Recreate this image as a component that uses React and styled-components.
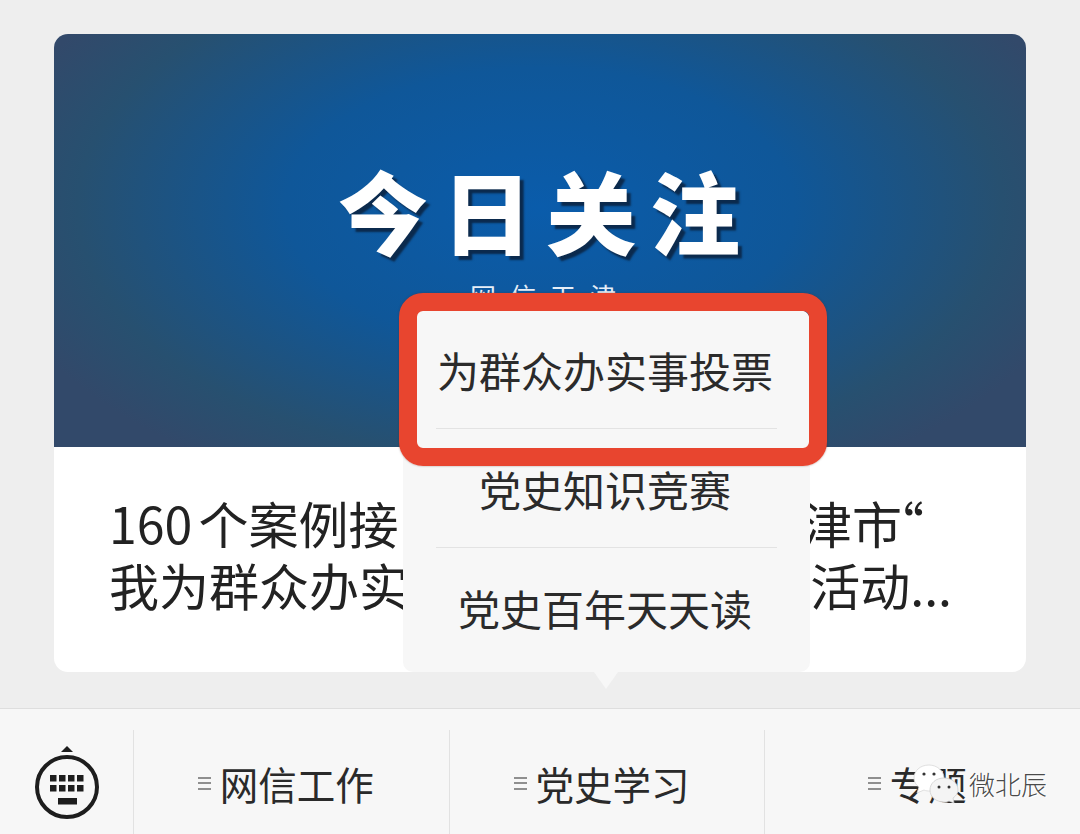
import React from 'react';
import styled, { createGlobalStyle } from 'styled-components';

const GlobalStyle = createGlobalStyle`
  html, body {
    margin: 0;
    padding: 0;
    background: #eeeeee;
    font-family: "Noto Sans CJK SC", "Liberation Sans", sans-serif;
  }
`

const Page = styled.div`
  position: relative;
  width: 1080px;
  height: 834px;
  overflow: hidden;
  display: flex;
  flex-direction: column;
  background: #eeeeee;
`

const CardArea = styled.div`
  padding: 34px 54px 36px;
`

const Card = styled.div`
  height: 638px;
  border-radius: 14px;
  overflow: hidden;
  background: #ffffff;
`

const Banner = styled.div`
  height: 413px;
  display: flex;
  flex-direction: column;
  align-items: center;
  padding-top: 119px;
  box-sizing: border-box;
  background: radial-gradient(ellipse 58% 75% at 50% 42%, #0a5cab 0%, #0f5799 45%, #275070 82%, #32496a 100%);
`

const BannerTitle = styled.div`
  font-size: 90px;
  line-height: 112px;
  font-weight: 900;
  letter-spacing: 14px;
  margin-right: -12px;
  color: #ffffff;
  text-shadow: 4px 4px 2px #0b2a4d;
`

const BannerSub = styled.div`
  margin: 13px 0 0 20px;
  font-size: 26px;
  line-height: 36px;
  letter-spacing: 14px;
  color: #e6eef7;
`

const Headline = styled.div`
  padding: 44px 74px 0 55px;
  font-size: 50px;
  line-height: 62px;
  color: #222222;
`

const HeadlineRow = styled.div`
  display: flex;
  justify-content: space-between;
  word-spacing: -5px;
`

const OpenQuote = styled.span`
  margin: 0 28px 0 -28px;
`

const Popup = styled.div`
  position: absolute;
  left: 403px;
  top: 310px;
  width: 407px;
  height: 362px;
  border-radius: 10px;
  background: #f7f7f7;
  display: flex;
  flex-direction: column;

  &::after {
    content: '';
    position: absolute;
    left: 191px;
    bottom: -17px;
    border-left: 12px solid transparent;
    border-right: 12px solid transparent;
    border-top: 17px solid #f7f7f7;
  }
`

const PopupItem = styled.div`
  height: ${props => props.$height}px;
  margin: 0 33px;
  padding-right: 3px;
  box-sizing: border-box;
  display: flex;
  justify-content: center;
  align-items: center;
  font-size: ${props => props.$size}px;
  color: #2b2b2b;
  white-space: nowrap;
  border-bottom: ${props => (props.$last ? 'none' : '1px solid #e3e3e3')};
`

const Highlight = styled.div`
  position: absolute;
  left: 399px;
  top: 293px;
  width: 428px;
  height: 173px;
  box-sizing: border-box;
  border: 18px solid #e8452f;
  border-radius: 24px;
  box-shadow: 0 0 2px rgba(90, 40, 30, 0.5);
`

const BottomBar = styled.div`
  flex: 1;
  display: flex;
  background: #f7f7f7;
  border-top: 1px solid #dedede;
  padding-top: 21px;
`

const KeyboardCell = styled.div`
  width: 133px;
  display: flex;
  justify-content: center;
  padding-top: 15px;
`

const MenuCell = styled.div`
  flex: 1;
  display: flex;
  align-items: center;
  justify-content: center;
  gap: 9px;
  padding: 2px 11px 0 0;
  border-left: 1px solid #e2e2e2;
  font-size: 38.5px;
  color: #2a2a2a;
`

const MenuLines = styled.span`
  width: 13px;
  height: 13px;
  border-top: 2px solid #8f8f8f;
  border-bottom: 2px solid #8f8f8f;
  box-sizing: border-box;
  position: relative;

  &::after {
    content: '';
    position: absolute;
    left: 0;
    right: 0;
    top: 3.5px;
    height: 2px;
    background: #8f8f8f;
  }
`

const Watermark = styled.div`
  position: absolute;
  left: 913px;
  top: 763px;
  display: flex;
  align-items: center;
  gap: 10px;
  font-size: 26px;
  line-height: 42px;
  font-weight: 300;
  color: #4a4a4a;
  text-shadow: 1px 1px 0 #ffffff, -1px 0 0 #ffffff;
`

function KeyboardIcon() {
  const keys = [47, 56, 65, 74];
  return (
    <svg width="66" height="76" viewBox="31 745 66 76">
      <path d="M64 746 L70 752 L58 752 Z" fill="#1d1d1d" />
      <circle cx="64" cy="787" r="30" fill="none" stroke="#1d1d1d" strokeWidth="4" />
      {keys.map(x => <rect key={x} x={x} y="775" width="6.5" height="6.5" fill="#1d1d1d" />)}
      {keys.map(x => <rect key={x} x={x} y="785" width="6.5" height="6.5" fill="#1d1d1d" />)}
      <rect x="55" y="798" width="19" height="6.5" fill="#1d1d1d" />
    </svg>
  );
}

function WechatMark() {
  return (
    <svg width="46" height="40" viewBox="0 0 46 40">
      <path d="M16 1 C7 1 1 7 1 14 C1 18 3 21 6 23 L4 29 L11 26 C13 27 15 27 17 27 C25 27 31 21 31 14 C31 7 24 1 16 1 Z" fill="#ffffff" stroke="#d8d8d8" strokeWidth="0.8" />
      <circle cx="11" cy="10" r="1.6" fill="#333333" />
      <circle cx="21" cy="10" r="1.6" fill="#333333" />
      <path d="M31 14 C23 14 17 19 17 26 C17 33 23 38 31 38 C33 38 34 38 36 37 L41 39 L40 34 C43 32 45 29 45 26 C45 19 39 14 31 14 Z" fill="#f4f4f4" stroke="#cfcfcf" strokeWidth="0.8" />
      <circle cx="26" cy="23" r="1.5" fill="#333333" />
      <circle cx="36" cy="23" r="1.5" fill="#333333" />
    </svg>
  );
}

export default function App() {
  return (
    <Page>
      <GlobalStyle />
      <CardArea>
        <Card>
          <Banner>
            <BannerTitle>今日关注</BannerTitle>
            <BannerSub>网信天津</BannerSub>
          </Banner>
          <Headline>
            <HeadlineRow>
              <span>160 个案例接</span>
              <span>津市<OpenQuote>“</OpenQuote></span>
            </HeadlineRow>
            <HeadlineRow>
              <span>我为群众办实</span>
              <span>活动...</span>
            </HeadlineRow>
          </Headline>
        </Card>
      </CardArea>
      <BottomBar>
        <KeyboardCell>
          <KeyboardIcon />
        </KeyboardCell>
        <MenuCell><MenuLines />网信工作</MenuCell>
        <MenuCell><MenuLines />党史学习</MenuCell>
        <MenuCell><MenuLines />专题</MenuCell>
      </BottomBar>
      <Popup>
        <PopupItem $height={119} $size={42}>为群众办实事投票</PopupItem>
        <PopupItem $height={119} $size={42}>党史知识竞赛</PopupItem>
        <PopupItem $height={118} $size={42} $last>党史百年天天读</PopupItem>
      </Popup>
      <Highlight />
      <Watermark>
        <WechatMark />
        微北辰
      </Watermark>
    </Page>
  );
}
